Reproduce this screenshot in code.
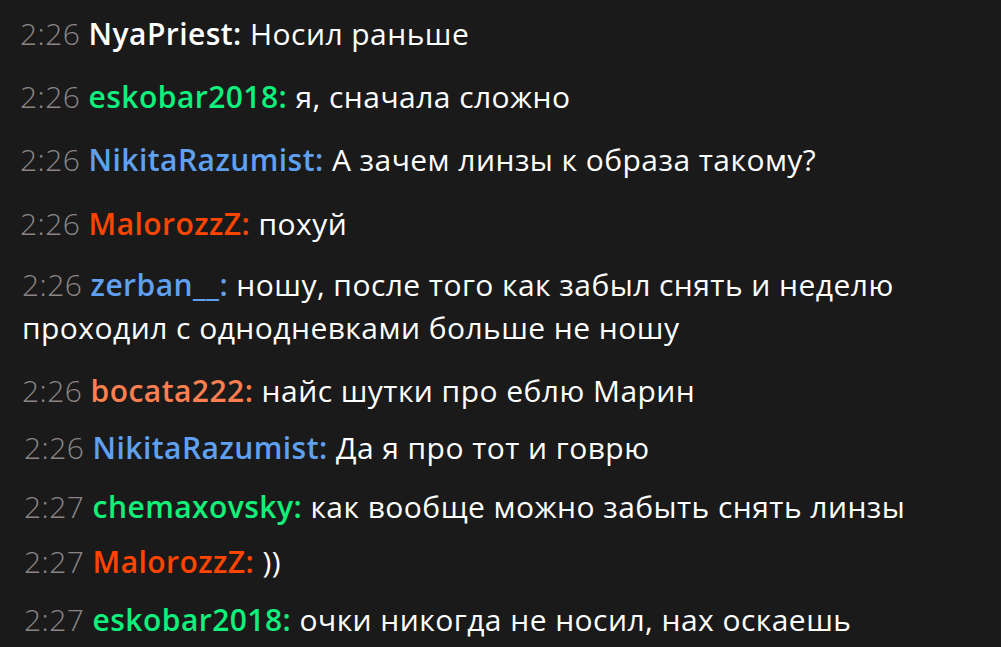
const messages = [
	{ time: "2:26", user: "NyaPriest", color: "text-white", text: "Носил раньше", pad: "pl-[20px]", mt: "mt-[12px]" },
	{ time: "2:26", user: "eskobar2018", color: "text-[#0ff07c]", text: "я, сначала сложно", pad: "pl-[20px]", mt: "mt-[20px]" },
	{ time: "2:26", user: "NikitaRazumist", color: "text-[#5fa0f0]", text: "А зачем линзы к образа такому?", pad: "pl-[20px]", mt: "mt-[20px]" },
	{ time: "2:26", user: "MalorozzZ", color: "text-[#ff4500]", text: "похуй", pad: "pl-[20px]", mt: "mt-[21px]" },
	{ time: "2:26", user: "zerban__", color: "text-[#5fa0f0]", text: "ношу, после того как забыл снять и неделю", rest: "проходил с однодневками больше не ношу", pad: "pl-[22px]", mt: "mt-[18px]" },
	{ time: "2:26", user: "bocata222", color: "text-[#ff7f50]", text: "найс шутки про еблю Марин", pad: "pl-[22px]", mt: "mt-[20px]" },
	{ time: "2:26", user: "NikitaRazumist", color: "text-[#5fa0f0]", text: "Да я про тот и говрю", pad: "pl-[24px]", mt: "mt-[14px]" },
	{ time: "2:27", user: "chemaxovsky", color: "text-[#12f07a]", text: "как вообще можно забыть снять линзы", pad: "pl-[24px]", mt: "mt-[16px]" },
	{ time: "2:27", user: "MalorozzZ", color: "text-[#ff4500]", text: "))", pad: "pl-[24px]", mt: "mt-[12px]" },
	{ time: "2:27", user: "eskobar2018", color: "text-[#0ff07c]", text: "очки никогда не носил, нах оскаешь", pad: "pl-[24px]", mt: "mt-[15px]" },
];

const App = () => {
	return (
		<div className="w-[1001px] h-[647px] overflow-hidden bg-[#1a1a1a] font-['Open_Sans','Noto_Sans',sans-serif] text-[30px] tracking-[0.45px] leading-[43px] text-white">
			{messages.map((m, i) => (
				<div key={i} className={`${m.pad} ${m.mt} whitespace-nowrap`}>
					<span className="font-light text-[#8c8585]">{m.time}</span>{" "}
					<span className={`font-semibold ${m.color}`}>{m.user}:</span>{" "}
					<span>{m.text}</span>
					{m.rest && (
						<>
							<br />
							<span>{m.rest}</span>
						</>
					)}
				</div>
			))}
		</div>
	);
};

export default App;
